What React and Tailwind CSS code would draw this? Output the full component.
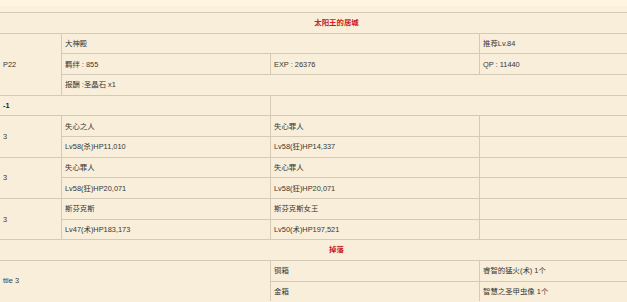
import React from "react";

const cell = "bg-[#f9eed9] flex items-center pl-[3px] whitespace-nowrap overflow-hidden";

export default function App() {
  return (
    <div
      className="w-[627px] h-[302px] overflow-hidden bg-[#f9eed9] text-[7.4px] text-[#363636]"
      style={{ fontFamily: '"Liberation Sans", "Noto Sans CJK SC", sans-serif' }}
    >
      <div className="h-[12px] bg-[#fbf0d9] flex flex-col">
        <div className="h-[6px] bg-[#fdf5df]" />
      </div>
      <div className="grid grid-cols-[61px_208px_208px_1fr] grid-rows-[repeat(14,19.67px)] gap-px pt-px bg-[#d4cab8]">
        {/* title */}
        <div className={`${cell} col-span-4 justify-center pl-[46px] text-[#cc1a1a] font-bold`}>太阳王的居城</div>

        {/* quest info */}
        <div className={`${cell} row-span-3 pl-0`}>P22</div>
        <div className={`${cell} col-span-2`}>大神殿</div>
        <div className={cell}>推荐Lv.84</div>
        <div className={cell}>羁绊 : 855</div>
        <div className={cell}>EXP : 26376</div>
        <div className={cell}>QP : 11440</div>
        <div className={`${cell} col-span-3`}>报酬 :圣晶石 x1</div>

        {/* battle header */}
        <div className={`${cell} col-span-2 pl-0 font-bold text-[#222]`}>-1</div>
        <div className={`${cell} col-span-2`} />

        {/* wave 1 */}
        <div className={`${cell} row-span-2 pl-0`}>3</div>
        <div className={cell}>失心之人</div>
        <div className={cell}>失心罪人</div>
        <div className={cell} />
        <div className={cell}>Lv58(杀)HP11,010</div>
        <div className={cell}>Lv58(狂)HP14,337</div>
        <div className={cell} />

        {/* wave 2 */}
        <div className={`${cell} row-span-2 pl-0`}>3</div>
        <div className={cell}>失心罪人</div>
        <div className={cell}>失心罪人</div>
        <div className={cell} />
        <div className={cell}>Lv58(狂)HP20,071</div>
        <div className={cell}>Lv58(狂)HP20,071</div>
        <div className={cell} />

        {/* wave 3 */}
        <div className={`${cell} row-span-2 pl-0`}>3</div>
        <div className={cell}>斯芬克斯</div>
        <div className={cell}>斯芬克斯女王</div>
        <div className={cell} />
        <div className={cell}>Lv47(术)HP183,173</div>
        <div className={cell}>Lv50(术)HP197,521</div>
        <div className={cell} />

        {/* drops */}
        <div className={`${cell} col-span-4 justify-center pl-[46px] text-[#cc1a1a] font-bold`}>掉落</div>
        <div className={`${cell} col-span-2 row-span-2 pl-0`}>ttle 3</div>
        <div className={cell}>铜箱</div>
        <div className={cell}>睿智的猛火(术) 1个</div>
        <div className={cell}>金箱</div>
        <div className={cell}>智慧之圣甲虫像 1个</div>
      </div>
    </div>
  );
}
